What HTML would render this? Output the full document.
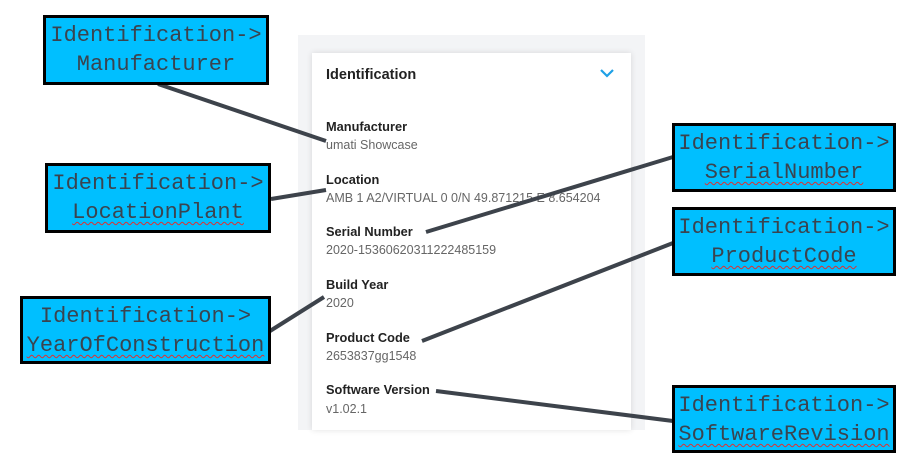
<!DOCTYPE html>
<html><head><meta charset="utf-8"><style>
body{margin:0;width:909px;height:475px;background:#fff;position:relative;overflow:hidden;font-family:"Liberation Sans",sans-serif}
.panel{position:absolute;left:298px;top:35px;width:347px;height:395px;background:#f3f4f6}
.card{position:absolute;left:312px;top:53px;width:319px;height:377px;background:#fff;box-shadow:0 0 6px rgba(0,0,0,.12)}
.t{position:absolute;left:326px;font-size:12.8px;color:#222;font-weight:bold;white-space:nowrap}
.v{position:absolute;left:326px;font-size:12.5px;color:#666;white-space:nowrap}
.box{position:absolute;box-sizing:border-box;border:3px solid #000;background:#00bfff;font-family:"Liberation Mono",monospace;font-size:22px;line-height:29px;color:#3a4450;text-align:center;padding-top:3px}
.u{text-decoration:underline wavy #e03030 1px;text-underline-offset:3px}
svg{position:absolute;left:0;top:0}
</style></head><body>
<div class="panel"></div>
<div class="card"></div>
<div class="t" style="top:67px;font-size:14.5px">Identification</div>
<svg width="909" height="475" style="z-index:1"><path d="M601 70 L607 76 L613 70" stroke="#1ea0e6" stroke-width="2.2" fill="none"/></svg>
<div class="t" style="top:119px">Manufacturer</div><div class="v" style="top:138px">umati Showcase</div>
<div class="t" style="top:172px">Location</div><div class="v" style="top:191px">AMB 1 A2/VIRTUAL 0 0/N 49.871215 E 8.654204</div>
<div class="t" style="top:224px">Serial Number</div><div class="v" style="top:243px">2020-15360620311222485159</div>
<div class="t" style="top:277px">Build Year</div><div class="v" style="top:296px">2020</div>
<div class="t" style="top:330px">Product Code</div><div class="v" style="top:349px">2653837gg1548</div>
<div class="t" style="top:382px">Software Version</div><div class="v" style="top:402px">v1.02.1</div>
<svg width="909" height="475" style="z-index:2"><g stroke="#3d434b" stroke-width="4" stroke-linecap="butt">
<line x1="158" y1="84" x2="326" y2="141"/>
<line x1="271" y1="199" x2="326" y2="190"/>
<line x1="426" y1="232" x2="673" y2="157"/>
<line x1="270" y1="331" x2="324" y2="297"/>
<line x1="422" y1="341" x2="673" y2="243"/>
<line x1="436" y1="391" x2="673" y2="421"/>
</g></svg>
<div class="box" style="left:43px;top:15px;width:226px;height:70px;z-index:3">Identification-><br>Manufacturer</div>
<div class="box" style="left:45px;top:163px;width:226px;height:70px;z-index:3">Identification-><br><span class="u">LocationPlant</span></div>
<div class="box" style="left:20px;top:296px;width:251px;height:68px;z-index:3">Identification-><br><span class="u">YearOfConstruction</span></div>
<div class="box" style="left:672px;top:123px;width:224px;height:69px;z-index:3">Identification-><br><span class="u">SerialNumber</span></div>
<div class="box" style="left:672px;top:207px;width:224px;height:69px;z-index:3">Identification-><br><span class="u">ProductCode</span></div>
<div class="box" style="left:672px;top:385px;width:224px;height:68px;z-index:3">Identification-><br><span class="u">SoftwareRevision</span></div>
</body></html>
